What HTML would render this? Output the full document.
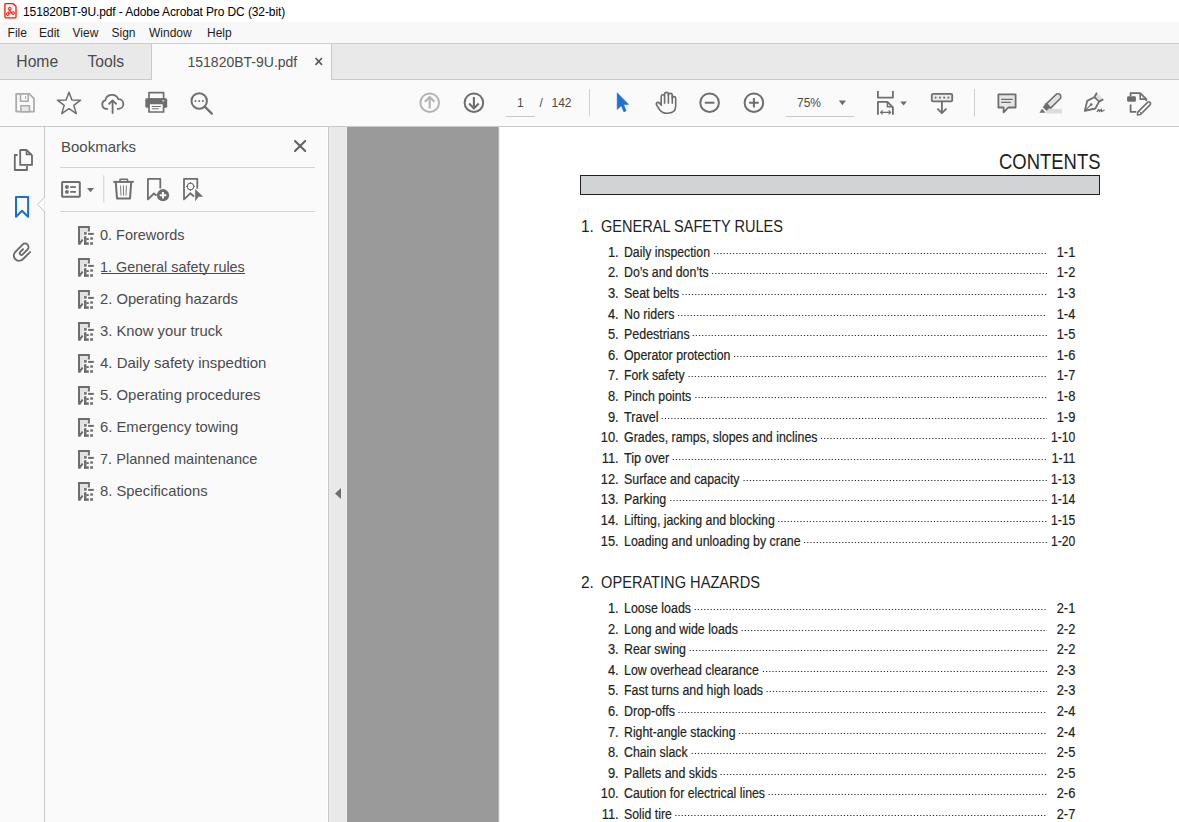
<!DOCTYPE html>
<html><head><meta charset="utf-8">
<style>
*{margin:0;padding:0;box-sizing:border-box}
html,body{width:1179px;height:822px;overflow:hidden;background:#fff;font-family:"Liberation Sans",sans-serif}
.a{position:absolute}
.t{position:absolute;white-space:nowrap;line-height:1}
#title{left:0;top:0;width:1179px;height:22px;background:#fff}
#menu{left:0;top:22px;width:1179px;height:22px;background:#f8f8f8;border-bottom:1px solid #cfcfcf}
#tabs{left:0;top:44px;width:1179px;height:36px;background:#e9e9e9;border-bottom:1px solid #c9c9c9}
#acttab{left:151px;top:44px;width:181px;height:36px;background:#fafafa;border-left:1px solid #c9c9c9;border-right:1px solid #c9c9c9}
#tool{left:0;top:80px;width:1179px;height:47px;background:#fafafa;border-bottom:1px solid #c9c9c9}
#rail{left:0;top:127px;width:45px;height:695px;background:#fafafa;border-right:1px solid #c9c9c9}
#panel{left:45px;top:127px;width:284px;height:695px;background:#fafafa;border-right:1px solid #c9c9c9}
#strip{left:329px;top:127px;width:18px;height:695px;background:#e9e9e9}
#gray{left:347px;top:127px;width:151px;height:695px;background:#9a9a9a}
#page{left:498px;top:127px;width:681px;height:695px;background:#fff}
svg{position:absolute;left:0;top:0}
</style></head><body>
<div id="title" class="a"></div>
<div id="menu" class="a"></div>
<div id="tabs" class="a"></div>
<div id="acttab" class="a"></div>
<div id="tool" class="a"></div>
<div id="rail" class="a"></div>
<div id="panel" class="a"></div>
<div id="strip" class="a"></div>
<div id="gray" class="a"></div>
<div id="page" class="a"></div>
<div class="a" style="left:327px;top:127px;width:1px;height:695px;background:#ffffff"></div>
<div class="a" style="left:346px;top:127px;width:1px;height:695px;background:#efefef"></div>
<div class="a" style="left:497px;top:127px;width:1px;height:695px;background:#959595"></div>
<div class="a" style="left:498px;top:127px;width:1px;height:695px;background:#b8b8b8"></div>
<div class="a" style="left:499px;top:127px;width:1px;height:695px;background:#eeeeee"></div>

<div class="t" style="left:23px;top:5.84px;font-size:12px;color:#000;letter-spacing:-0.1px">151820BT-9U.pdf - Adobe Acrobat Pro DC (32-bit)</div>
<div class="t" style="left:7.6px;top:26.84px;font-size:12px;color:#1e1e1e">File</div>
<div class="t" style="left:39px;top:26.84px;font-size:12px;color:#1e1e1e">Edit</div>
<div class="t" style="left:72.5px;top:26.84px;font-size:12px;color:#1e1e1e">View</div>
<div class="t" style="left:111.5px;top:26.84px;font-size:12px;color:#1e1e1e">Sign</div>
<div class="t" style="left:149px;top:26.84px;font-size:12px;color:#1e1e1e">Window</div>
<div class="t" style="left:207px;top:26.84px;font-size:12px;color:#1e1e1e">Help</div>
<div class="t" style="left:16.3px;top:53.5px;font-size:15.7px;color:#4b4b4b">Home</div>
<div class="t" style="left:87.5px;top:53.5px;font-size:15.7px;color:#4b4b4b">Tools</div>
<div class="t" style="left:187.5px;top:55.15px;font-size:14px;color:#4b4b4b">151820BT-9U.pdf</div>
<div class="t" style="left:517px;top:96.6px;font-size:12px;color:#4b4b4b">1</div>
<div class="t" style="left:539.5px;top:96.6px;font-size:12px;color:#4b4b4b">/</div>
<div class="t" style="left:551.5px;top:96.6px;font-size:12px;color:#4b4b4b">142</div>
<div class="t" style="left:797px;top:96.6px;font-size:12px;color:#4b4b4b">75%</div>
<div class="t" style="left:61px;top:139.3px;font-size:15px;color:#4b4b4b">Bookmarks</div>

<div class="a" style="left:60px;top:167px;width:255px;height:1px;background:#d2d2d2"></div>
<div class="a" style="left:60px;top:211px;width:255px;height:1px;background:#d2d2d2"></div>
<div class="t" style="left:100.40px;top:228.07px;font-size:14.8px;color:#4b4b4b;transform:scaleX(0.9785);transform-origin:0 0">0. Forewords</div>
<div class="t" style="left:100.40px;top:260.07px;font-size:14.8px;color:#4b4b4b;transform:scaleX(0.9726);transform-origin:0 0">1. General safety rules</div>
<div class="a" style="left:101px;top:272.6px;width:144px;height:1px;background:#4b4b4b"></div>
<div class="t" style="left:100.40px;top:292.07px;font-size:14.8px;color:#4b4b4b;transform:scaleX(0.9979);transform-origin:0 0">2. Operating hazards</div>
<div class="t" style="left:100.40px;top:324.07px;font-size:14.8px;color:#4b4b4b;transform:scaleX(0.9996);transform-origin:0 0">3. Know your truck</div>
<div class="t" style="left:100.40px;top:356.07px;font-size:14.8px;color:#4b4b4b;transform:scaleX(1.0116);transform-origin:0 0">4. Daily safety inspedtion</div>
<div class="t" style="left:100.40px;top:388.07px;font-size:14.8px;color:#4b4b4b;transform:scaleX(1.0058);transform-origin:0 0">5. Operating procedures</div>
<div class="t" style="left:100.40px;top:420.07px;font-size:14.8px;color:#4b4b4b;transform:scaleX(1.0002);transform-origin:0 0">6. Emergency towing</div>
<div class="t" style="left:100.40px;top:452.07px;font-size:14.8px;color:#4b4b4b;transform:scaleX(0.9868);transform-origin:0 0">7. Planned maintenance</div>
<div class="t" style="left:100.40px;top:484.07px;font-size:14.8px;color:#4b4b4b;transform:scaleX(0.9995);transform-origin:0 0">8. Specifications</div>

<div class="t" style="left:998.60px;top:150.38px;font-size:22.7px;color:#231f20;transform:scaleX(0.8134);transform-origin:0 0">CONTENTS</div>
<div class="a" style="left:580px;top:175px;width:520px;height:20px;background:#d1d3d4;border:1.3px solid #231f20"></div>
<div class="t" style="left:581.00px;top:218.44px;font-size:17.2px;color:#231f20;transform:scaleX(0.9);transform-origin:0 0">1.</div>
<div class="t" style="left:600.50px;top:218.44px;font-size:17.2px;color:#231f20;transform:scaleX(0.8468);transform-origin:0 0">GENERAL SAFETY RULES</div>
<div class="t" style="left:581.00px;top:574.44px;font-size:17.2px;color:#231f20;transform:scaleX(0.9);transform-origin:0 0">2.</div>
<div class="t" style="left:600.50px;top:574.44px;font-size:17.2px;color:#231f20;transform:scaleX(0.8509);transform-origin:0 0">OPERATING HAZARDS</div>
<div class="t" style="left:558px;width:60.700000000000045px;text-align:right;top:245.15px;font-size:14.0px;color:#231f20;-webkit-text-stroke:0.2px #231f20;transform:scaleX(0.92);transform-origin:100% 0">1.</div>
<div class="t" style="left:624.00px;top:245.15px;font-size:14.0px;color:#231f20;-webkit-text-stroke:0.2px #231f20;transform:scaleX(0.8770);transform-origin:0 0">Daily inspection</div>
<div class="t" style="left:1000px;width:75.3px;text-align:right;top:245.15px;font-size:14.0px;color:#231f20;-webkit-text-stroke:0.2px #231f20;transform:scaleX(0.92);transform-origin:100% 0">1-1</div>
<div class="t" style="left:558px;width:60.700000000000045px;text-align:right;top:265.15px;font-size:14.0px;color:#231f20;-webkit-text-stroke:0.2px #231f20;transform:scaleX(0.92);transform-origin:100% 0">2.</div>
<div class="t" style="left:624.00px;top:265.15px;font-size:14.0px;color:#231f20;-webkit-text-stroke:0.2px #231f20;transform:scaleX(0.8783);transform-origin:0 0">Do&#8217;s and don&#8217;ts</div>
<div class="t" style="left:1000px;width:75.3px;text-align:right;top:265.15px;font-size:14.0px;color:#231f20;-webkit-text-stroke:0.2px #231f20;transform:scaleX(0.92);transform-origin:100% 0">1-2</div>
<div class="t" style="left:558px;width:60.700000000000045px;text-align:right;top:286.15px;font-size:14.0px;color:#231f20;-webkit-text-stroke:0.2px #231f20;transform:scaleX(0.92);transform-origin:100% 0">3.</div>
<div class="t" style="left:624.00px;top:286.15px;font-size:14.0px;color:#231f20;-webkit-text-stroke:0.2px #231f20;transform:scaleX(0.8849);transform-origin:0 0">Seat belts</div>
<div class="t" style="left:1000px;width:75.3px;text-align:right;top:286.15px;font-size:14.0px;color:#231f20;-webkit-text-stroke:0.2px #231f20;transform:scaleX(0.92);transform-origin:100% 0">1-3</div>
<div class="t" style="left:558px;width:60.700000000000045px;text-align:right;top:307.15px;font-size:14.0px;color:#231f20;-webkit-text-stroke:0.2px #231f20;transform:scaleX(0.92);transform-origin:100% 0">4.</div>
<div class="t" style="left:624.00px;top:307.15px;font-size:14.0px;color:#231f20;-webkit-text-stroke:0.2px #231f20;transform:scaleX(0.8874);transform-origin:0 0">No riders</div>
<div class="t" style="left:1000px;width:75.3px;text-align:right;top:307.15px;font-size:14.0px;color:#231f20;-webkit-text-stroke:0.2px #231f20;transform:scaleX(0.92);transform-origin:100% 0">1-4</div>
<div class="t" style="left:558px;width:60.700000000000045px;text-align:right;top:327.15px;font-size:14.0px;color:#231f20;-webkit-text-stroke:0.2px #231f20;transform:scaleX(0.92);transform-origin:100% 0">5.</div>
<div class="t" style="left:624.00px;top:327.15px;font-size:14.0px;color:#231f20;-webkit-text-stroke:0.2px #231f20;transform:scaleX(0.8886);transform-origin:0 0">Pedestrians</div>
<div class="t" style="left:1000px;width:75.3px;text-align:right;top:327.15px;font-size:14.0px;color:#231f20;-webkit-text-stroke:0.2px #231f20;transform:scaleX(0.92);transform-origin:100% 0">1-5</div>
<div class="t" style="left:558px;width:60.700000000000045px;text-align:right;top:348.15px;font-size:14.0px;color:#231f20;-webkit-text-stroke:0.2px #231f20;transform:scaleX(0.92);transform-origin:100% 0">6.</div>
<div class="t" style="left:624.00px;top:348.15px;font-size:14.0px;color:#231f20;-webkit-text-stroke:0.2px #231f20;transform:scaleX(0.8821);transform-origin:0 0">Operator protection</div>
<div class="t" style="left:1000px;width:75.3px;text-align:right;top:348.15px;font-size:14.0px;color:#231f20;-webkit-text-stroke:0.2px #231f20;transform:scaleX(0.92);transform-origin:100% 0">1-6</div>
<div class="t" style="left:558px;width:60.700000000000045px;text-align:right;top:368.15px;font-size:14.0px;color:#231f20;-webkit-text-stroke:0.2px #231f20;transform:scaleX(0.92);transform-origin:100% 0">7.</div>
<div class="t" style="left:624.00px;top:368.15px;font-size:14.0px;color:#231f20;-webkit-text-stroke:0.2px #231f20;transform:scaleX(0.8751);transform-origin:0 0">Fork safety</div>
<div class="t" style="left:1000px;width:75.3px;text-align:right;top:368.15px;font-size:14.0px;color:#231f20;-webkit-text-stroke:0.2px #231f20;transform:scaleX(0.92);transform-origin:100% 0">1-7</div>
<div class="t" style="left:558px;width:60.700000000000045px;text-align:right;top:389.15px;font-size:14.0px;color:#231f20;-webkit-text-stroke:0.2px #231f20;transform:scaleX(0.92);transform-origin:100% 0">8.</div>
<div class="t" style="left:624.00px;top:389.15px;font-size:14.0px;color:#231f20;-webkit-text-stroke:0.2px #231f20;transform:scaleX(0.8823);transform-origin:0 0">Pinch points</div>
<div class="t" style="left:1000px;width:75.3px;text-align:right;top:389.15px;font-size:14.0px;color:#231f20;-webkit-text-stroke:0.2px #231f20;transform:scaleX(0.92);transform-origin:100% 0">1-8</div>
<div class="t" style="left:558px;width:60.700000000000045px;text-align:right;top:410.15px;font-size:14.0px;color:#231f20;-webkit-text-stroke:0.2px #231f20;transform:scaleX(0.92);transform-origin:100% 0">9.</div>
<div class="t" style="left:624.00px;top:410.15px;font-size:14.0px;color:#231f20;-webkit-text-stroke:0.2px #231f20;transform:scaleX(0.8987);transform-origin:0 0">Travel</div>
<div class="t" style="left:1000px;width:75.3px;text-align:right;top:410.15px;font-size:14.0px;color:#231f20;-webkit-text-stroke:0.2px #231f20;transform:scaleX(0.92);transform-origin:100% 0">1-9</div>
<div class="t" style="left:558px;width:60.700000000000045px;text-align:right;top:430.15px;font-size:14.0px;color:#231f20;-webkit-text-stroke:0.2px #231f20;transform:scaleX(0.92);transform-origin:100% 0">10.</div>
<div class="t" style="left:624.00px;top:430.15px;font-size:14.0px;color:#231f20;-webkit-text-stroke:0.2px #231f20;transform:scaleX(0.8849);transform-origin:0 0">Grades, ramps, slopes and inclines</div>
<div class="t" style="left:1000px;width:75.3px;text-align:right;top:430.15px;font-size:14.0px;color:#231f20;-webkit-text-stroke:0.2px #231f20;transform:scaleX(0.87);transform-origin:100% 0">1-10</div>
<div class="t" style="left:558px;width:60.700000000000045px;text-align:right;top:451.15px;font-size:14.0px;color:#231f20;-webkit-text-stroke:0.2px #231f20;transform:scaleX(0.92);transform-origin:100% 0">11.</div>
<div class="t" style="left:624.00px;top:451.15px;font-size:14.0px;color:#231f20;-webkit-text-stroke:0.2px #231f20;transform:scaleX(0.9049);transform-origin:0 0">Tip over</div>
<div class="t" style="left:1000px;width:75.3px;text-align:right;top:451.15px;font-size:14.0px;color:#231f20;-webkit-text-stroke:0.2px #231f20;transform:scaleX(0.87);transform-origin:100% 0">1-11</div>
<div class="t" style="left:558px;width:60.700000000000045px;text-align:right;top:472.15px;font-size:14.0px;color:#231f20;-webkit-text-stroke:0.2px #231f20;transform:scaleX(0.92);transform-origin:100% 0">12.</div>
<div class="t" style="left:624.00px;top:472.15px;font-size:14.0px;color:#231f20;-webkit-text-stroke:0.2px #231f20;transform:scaleX(0.8834);transform-origin:0 0">Surface and capacity</div>
<div class="t" style="left:1000px;width:75.3px;text-align:right;top:472.15px;font-size:14.0px;color:#231f20;-webkit-text-stroke:0.2px #231f20;transform:scaleX(0.87);transform-origin:100% 0">1-13</div>
<div class="t" style="left:558px;width:60.700000000000045px;text-align:right;top:492.15px;font-size:14.0px;color:#231f20;-webkit-text-stroke:0.2px #231f20;transform:scaleX(0.92);transform-origin:100% 0">13.</div>
<div class="t" style="left:624.00px;top:492.15px;font-size:14.0px;color:#231f20;-webkit-text-stroke:0.2px #231f20;transform:scaleX(0.8911);transform-origin:0 0">Parking</div>
<div class="t" style="left:1000px;width:75.3px;text-align:right;top:492.15px;font-size:14.0px;color:#231f20;-webkit-text-stroke:0.2px #231f20;transform:scaleX(0.87);transform-origin:100% 0">1-14</div>
<div class="t" style="left:558px;width:60.700000000000045px;text-align:right;top:513.15px;font-size:14.0px;color:#231f20;-webkit-text-stroke:0.2px #231f20;transform:scaleX(0.92);transform-origin:100% 0">14.</div>
<div class="t" style="left:624.00px;top:513.15px;font-size:14.0px;color:#231f20;-webkit-text-stroke:0.2px #231f20;transform:scaleX(0.8807);transform-origin:0 0">Lifting, jacking and blocking</div>
<div class="t" style="left:1000px;width:75.3px;text-align:right;top:513.15px;font-size:14.0px;color:#231f20;-webkit-text-stroke:0.2px #231f20;transform:scaleX(0.87);transform-origin:100% 0">1-15</div>
<div class="t" style="left:558px;width:60.700000000000045px;text-align:right;top:534.15px;font-size:14.0px;color:#231f20;-webkit-text-stroke:0.2px #231f20;transform:scaleX(0.92);transform-origin:100% 0">15.</div>
<div class="t" style="left:624.00px;top:534.15px;font-size:14.0px;color:#231f20;-webkit-text-stroke:0.2px #231f20;transform:scaleX(0.8862);transform-origin:0 0">Loading and unloading by crane</div>
<div class="t" style="left:1000px;width:75.3px;text-align:right;top:534.15px;font-size:14.0px;color:#231f20;-webkit-text-stroke:0.2px #231f20;transform:scaleX(0.87);transform-origin:100% 0">1-20</div>
<div class="t" style="left:558px;width:60.700000000000045px;text-align:right;top:601.15px;font-size:14.0px;color:#231f20;-webkit-text-stroke:0.2px #231f20;transform:scaleX(0.92);transform-origin:100% 0">1.</div>
<div class="t" style="left:624.00px;top:601.15px;font-size:14.0px;color:#231f20;-webkit-text-stroke:0.2px #231f20;transform:scaleX(0.8886);transform-origin:0 0">Loose loads</div>
<div class="t" style="left:1000px;width:75.3px;text-align:right;top:601.15px;font-size:14.0px;color:#231f20;-webkit-text-stroke:0.2px #231f20;transform:scaleX(0.92);transform-origin:100% 0">2-1</div>
<div class="t" style="left:558px;width:60.700000000000045px;text-align:right;top:622.15px;font-size:14.0px;color:#231f20;-webkit-text-stroke:0.2px #231f20;transform:scaleX(0.92);transform-origin:100% 0">2.</div>
<div class="t" style="left:624.00px;top:622.15px;font-size:14.0px;color:#231f20;-webkit-text-stroke:0.2px #231f20;transform:scaleX(0.8868);transform-origin:0 0">Long and wide loads</div>
<div class="t" style="left:1000px;width:75.3px;text-align:right;top:622.15px;font-size:14.0px;color:#231f20;-webkit-text-stroke:0.2px #231f20;transform:scaleX(0.92);transform-origin:100% 0">2-2</div>
<div class="t" style="left:558px;width:60.700000000000045px;text-align:right;top:642.15px;font-size:14.0px;color:#231f20;-webkit-text-stroke:0.2px #231f20;transform:scaleX(0.92);transform-origin:100% 0">3.</div>
<div class="t" style="left:624.00px;top:642.15px;font-size:14.0px;color:#231f20;-webkit-text-stroke:0.2px #231f20;transform:scaleX(0.8853);transform-origin:0 0">Rear swing</div>
<div class="t" style="left:1000px;width:75.3px;text-align:right;top:642.15px;font-size:14.0px;color:#231f20;-webkit-text-stroke:0.2px #231f20;transform:scaleX(0.92);transform-origin:100% 0">2-2</div>
<div class="t" style="left:558px;width:60.700000000000045px;text-align:right;top:663.15px;font-size:14.0px;color:#231f20;-webkit-text-stroke:0.2px #231f20;transform:scaleX(0.92);transform-origin:100% 0">4.</div>
<div class="t" style="left:624.00px;top:663.15px;font-size:14.0px;color:#231f20;-webkit-text-stroke:0.2px #231f20;transform:scaleX(0.8843);transform-origin:0 0">Low overhead clearance</div>
<div class="t" style="left:1000px;width:75.3px;text-align:right;top:663.15px;font-size:14.0px;color:#231f20;-webkit-text-stroke:0.2px #231f20;transform:scaleX(0.92);transform-origin:100% 0">2-3</div>
<div class="t" style="left:558px;width:60.700000000000045px;text-align:right;top:683.15px;font-size:14.0px;color:#231f20;-webkit-text-stroke:0.2px #231f20;transform:scaleX(0.92);transform-origin:100% 0">5.</div>
<div class="t" style="left:624.00px;top:683.15px;font-size:14.0px;color:#231f20;-webkit-text-stroke:0.2px #231f20;transform:scaleX(0.8841);transform-origin:0 0">Fast turns and high loads</div>
<div class="t" style="left:1000px;width:75.3px;text-align:right;top:683.15px;font-size:14.0px;color:#231f20;-webkit-text-stroke:0.2px #231f20;transform:scaleX(0.92);transform-origin:100% 0">2-3</div>
<div class="t" style="left:558px;width:60.700000000000045px;text-align:right;top:704.15px;font-size:14.0px;color:#231f20;-webkit-text-stroke:0.2px #231f20;transform:scaleX(0.92);transform-origin:100% 0">6.</div>
<div class="t" style="left:624.00px;top:704.15px;font-size:14.0px;color:#231f20;-webkit-text-stroke:0.2px #231f20;transform:scaleX(0.8896);transform-origin:0 0">Drop-offs</div>
<div class="t" style="left:1000px;width:75.3px;text-align:right;top:704.15px;font-size:14.0px;color:#231f20;-webkit-text-stroke:0.2px #231f20;transform:scaleX(0.92);transform-origin:100% 0">2-4</div>
<div class="t" style="left:558px;width:60.700000000000045px;text-align:right;top:725.15px;font-size:14.0px;color:#231f20;-webkit-text-stroke:0.2px #231f20;transform:scaleX(0.92);transform-origin:100% 0">7.</div>
<div class="t" style="left:624.00px;top:725.15px;font-size:14.0px;color:#231f20;-webkit-text-stroke:0.2px #231f20;transform:scaleX(0.8789);transform-origin:0 0">Right-angle stacking</div>
<div class="t" style="left:1000px;width:75.3px;text-align:right;top:725.15px;font-size:14.0px;color:#231f20;-webkit-text-stroke:0.2px #231f20;transform:scaleX(0.92);transform-origin:100% 0">2-4</div>
<div class="t" style="left:558px;width:60.700000000000045px;text-align:right;top:745.15px;font-size:14.0px;color:#231f20;-webkit-text-stroke:0.2px #231f20;transform:scaleX(0.92);transform-origin:100% 0">8.</div>
<div class="t" style="left:624.00px;top:745.15px;font-size:14.0px;color:#231f20;-webkit-text-stroke:0.2px #231f20;transform:scaleX(0.8788);transform-origin:0 0">Chain slack</div>
<div class="t" style="left:1000px;width:75.3px;text-align:right;top:745.15px;font-size:14.0px;color:#231f20;-webkit-text-stroke:0.2px #231f20;transform:scaleX(0.92);transform-origin:100% 0">2-5</div>
<div class="t" style="left:558px;width:60.700000000000045px;text-align:right;top:766.15px;font-size:14.0px;color:#231f20;-webkit-text-stroke:0.2px #231f20;transform:scaleX(0.92);transform-origin:100% 0">9.</div>
<div class="t" style="left:624.00px;top:766.15px;font-size:14.0px;color:#231f20;-webkit-text-stroke:0.2px #231f20;transform:scaleX(0.8861);transform-origin:0 0">Pallets and skids</div>
<div class="t" style="left:1000px;width:75.3px;text-align:right;top:766.15px;font-size:14.0px;color:#231f20;-webkit-text-stroke:0.2px #231f20;transform:scaleX(0.92);transform-origin:100% 0">2-5</div>
<div class="t" style="left:558px;width:60.700000000000045px;text-align:right;top:786.15px;font-size:14.0px;color:#231f20;-webkit-text-stroke:0.2px #231f20;transform:scaleX(0.92);transform-origin:100% 0">10.</div>
<div class="t" style="left:624.00px;top:786.15px;font-size:14.0px;color:#231f20;-webkit-text-stroke:0.2px #231f20;transform:scaleX(0.8796);transform-origin:0 0">Caution for electrical lines</div>
<div class="t" style="left:1000px;width:75.3px;text-align:right;top:786.15px;font-size:14.0px;color:#231f20;-webkit-text-stroke:0.2px #231f20;transform:scaleX(0.92);transform-origin:100% 0">2-6</div>
<div class="t" style="left:558px;width:60.700000000000045px;text-align:right;top:807.15px;font-size:14.0px;color:#231f20;-webkit-text-stroke:0.2px #231f20;transform:scaleX(0.92);transform-origin:100% 0">11.</div>
<div class="t" style="left:624.00px;top:807.15px;font-size:14.0px;color:#231f20;-webkit-text-stroke:0.2px #231f20;transform:scaleX(0.8776);transform-origin:0 0">Solid tire</div>
<div class="t" style="left:1000px;width:75.3px;text-align:right;top:807.15px;font-size:14.0px;color:#231f20;-webkit-text-stroke:0.2px #231f20;transform:scaleX(0.92);transform-origin:100% 0">2-7</div>
<svg width="1179" height="822" style="position:absolute;left:0;top:0"><g stroke="#2a2a2a" stroke-width="1" stroke-dasharray="1.2 1.98" fill="none"><path d="M714.00 253.50 H1047"/><path d="M712.00 273.50 H1047"/><path d="M682.40 294.50 H1047"/><path d="M678.00 315.50 H1047"/><path d="M692.60 335.50 H1047"/><path d="M734.00 356.50 H1047"/><path d="M688.50 376.50 H1047"/><path d="M695.30 397.50 H1047"/><path d="M661.70 418.50 H1047"/><path d="M820.90 438.50 H1047"/><path d="M672.70 459.50 H1047"/><path d="M743.50 480.50 H1047"/><path d="M670.20 500.50 H1047"/><path d="M778.10 521.50 H1047"/><path d="M804.00 542.50 H1047"/><path d="M694.70 609.50 H1047"/><path d="M741.50 630.50 H1047"/><path d="M689.60 650.50 H1047"/><path d="M762.90 671.50 H1047"/><path d="M766.50 691.50 H1047"/><path d="M678.40 712.50 H1047"/><path d="M739.00 733.50 H1047"/><path d="M691.60 753.50 H1047"/><path d="M720.50 774.50 H1047"/><path d="M768.50 794.50 H1047"/><path d="M675.30 815.50 H1047"/></g></svg>

<svg width="1179" height="822" viewBox="0 0 1179 822">
<g fill="none" stroke-linecap="butt" stroke-linejoin="round">
<!-- title pdf icon -->
<path d="M5.7 3.7 H13.2 L16 6.5 V17 Q16 17.8 15.2 17.8 H5.7 Q4.9 17.8 4.9 17 V4.5 Q4.9 3.7 5.7 3.7 Z" stroke="#fa1405" stroke-width="1.3" fill="#f6fbfb"/>
<rect x="6.8" y="5.6" width="7" height="9.5" fill="#eef0f0" stroke="none"/>
<g fill="#fa1405" stroke="none"><circle cx="9.8" cy="8.8" r="1.8"/><circle cx="7.7" cy="14.1" r="1.8"/><circle cx="13.1" cy="13.1" r="1.8"/><circle cx="9.8" cy="12" r="1.4"/></g>
<path d="M9.8 8.8 V12 L7.7 14.1 M9.8 12 L13.1 13.1" stroke="#fa1405" stroke-width="1.5"/>
<g fill="#fff" stroke="none"><circle cx="9.8" cy="8.8" r="0.8"/><circle cx="7.7" cy="14.1" r="0.8"/><circle cx="13.1" cy="13.1" r="0.8"/><circle cx="9.8" cy="12" r="0.7"/></g>

<!-- tab close -->
<path d="M315.5 58 L322 64.8 M322 58 L315.5 64.8" stroke="#5a5a5a" stroke-width="1.7"/>

<!-- save (disabled) -->
<path d="M16.2 93.9 H29.3 L34 98.6 V111.6 H16.2 Z" stroke="#ababab" stroke-width="1.8"/>
<path d="M20.5 93.9 V101.3 H28.2 V93.9" stroke="#ababab" stroke-width="1.6"/>
<path d="M25.5 96 V99" stroke="#ababab" stroke-width="1"/>
<rect x="20.9" y="105.7" width="8.6" height="6" fill="#e8e8e8" stroke="#ababab" stroke-width="1.6"/>

<!-- star -->
<path d="M69 92.2 L71.9 100.1 L80.6 100.2 L73.8 105.4 L76.3 113.6 L69 108.6 L61.7 113.6 L64.2 105.4 L57.4 100.2 L66.1 100.1 Z" stroke="#6e6e6e" stroke-width="1.5"/>

<!-- cloud upload -->
<path d="M108 108.8 H106.5 A4.3 4.3 0 0 1 105.3 100.4 A6.8 6.8 0 0 1 118.3 99.2 A4.8 4.8 0 0 1 118.8 108.8 H117" stroke="#6e6e6e" stroke-width="1.8"/>
<path d="M112.6 113.7 V100.6 M108.6 104.4 L112.6 100.4 L116.6 104.4" stroke="#6e6e6e" stroke-width="1.8"/>

<!-- print -->
<rect x="149" y="92.6" width="14.6" height="6.5" stroke="#6e6e6e" stroke-width="1.7"/>
<rect x="145.3" y="98.3" width="21.9" height="9.5" rx="1.3" fill="#6e6e6e"/>
<rect x="149" y="103.4" width="14.6" height="8.6" fill="#fafafa" stroke="#6e6e6e" stroke-width="1.7"/>
<path d="M151.8 106.5 H160.8 M151.8 108.8 H158.8" stroke="#6e6e6e" stroke-width="1"/>
<rect x="162.2" y="100.4" width="2" height="1" fill="#fafafa"/>

<!-- search more -->
<circle cx="199.2" cy="101" r="7.7" stroke="#6e6e6e" stroke-width="2"/>
<path d="M204.8 106.6 L211.8 113.6" stroke="#6e6e6e" stroke-width="2.2" stroke-linecap="round"/>
<g fill="#6e6e6e" stroke="none"><circle cx="195.5" cy="101" r="1"/><circle cx="199.2" cy="101" r="1"/><circle cx="202.9" cy="101" r="1"/></g>

<!-- page up (disabled) / down -->
<circle cx="429.7" cy="102.7" r="9.3" stroke="#b4b4b4" stroke-width="2"/>
<path d="M429.7 108.5 V97.2 M424.9 101.8 L429.7 97 L434.5 101.8" stroke="#b4b4b4" stroke-width="2.1"/>
<circle cx="473.9" cy="102.7" r="9.3" stroke="#6e6e6e" stroke-width="2"/>
<path d="M473.9 97 V108.2 M469.1 103.6 L473.9 108.4 L478.7 103.6" stroke="#6e6e6e" stroke-width="2.1"/>
<rect x="506" y="116" width="28.5" height="1" fill="#c8c8c8" stroke="none"/>
<rect x="589" y="89" width="1" height="27.5" fill="#d0d0d0" stroke="none"/>

<!-- select arrow -->
<path d="M617.2 92.8 L628.6 104.4 L623.6 104.6 L626.1 110.8 L623.9 111.9 L621.3 105.7 L617.2 109.4 Z" fill="#2271d0" stroke="#2271d0" stroke-width="0.6"/>

<!-- hand -->
<path d="M661.2 105.3 V96.5 A1.7 1.7 0 0 1 664.6 96.5 V94.3 A1.9 1.9 0 0 1 668.4 94.3 V95.35 A1.95 1.95 0 0 1 672.3 95.35 V98.3 A1.7 1.7 0 0 1 675.7 98.3 V106 Q675.7 113.3 667 113.3 Q662.3 113.3 659.8 110 L656.6 105 Q655.8 103.3 657.2 102.5 Q658.5 101.9 659.6 103.3 Z" stroke="#6e6e6e" stroke-width="1.6"/>
<path d="M664.6 96.5 V103.7 M668.4 94.3 V103.7 M672.3 95.35 V103.7" stroke="#6e6e6e" stroke-width="1.6"/>

<!-- zoom out / in -->
<circle cx="709.6" cy="102.7" r="9.3" stroke="#6e6e6e" stroke-width="2"/>
<path d="M704.8 102.7 H714.4" stroke="#6e6e6e" stroke-width="2"/>
<circle cx="753.9" cy="102.7" r="9.3" stroke="#6e6e6e" stroke-width="2"/>
<path d="M749.1 102.7 H758.7 M753.9 97.9 V107.5" stroke="#6e6e6e" stroke-width="2"/>

<!-- zoom field -->
<rect x="786" y="116" width="68" height="1" fill="#c8c8c8" stroke="none"/>
<path d="M838.8 100.6 H846 L842.4 105.2 Z" fill="#6e6e6e" stroke="none"/>

<!-- fit page -->
<path d="M877.9 91 V97.6 H892.9 V91" stroke="#6e6e6e" stroke-width="1.8"/>
<path d="M877.9 114.7 V101.8 H887.4 L892.9 107.3 V114.7" stroke="#6e6e6e" stroke-width="1.8"/>
<path d="M887.4 101.8 V106.8 H892.9" stroke="#6e6e6e" stroke-width="1.5"/>
<path d="M880.6 112.4 H890.6 M882.6 110.4 L880.6 112.4 L882.6 114.4 M888.6 110.4 L890.6 112.4 L888.6 114.4" stroke="#6e6e6e" stroke-width="1.2"/>
<path d="M900.2 101.4 H907 L903.6 105.4 Z" fill="#6e6e6e" stroke="none"/>

<!-- page display -->
<rect x="931.8" y="93.8" width="20.4" height="7.6" rx="1.2" fill="#ebebeb" stroke="#6e6e6e" stroke-width="1.8"/>
<g fill="#6e6e6e" stroke="none"><rect x="934.7" y="96.7" width="1.8" height="1.8"/><rect x="939" y="96.7" width="1.8" height="1.8"/><rect x="943.3" y="96.7" width="1.8" height="1.8"/><rect x="947.5" y="96.7" width="1.8" height="1.8"/></g>
<path d="M941.9 101.7 V113 M937.4 108.6 L941.9 113.2 L946.4 108.6" stroke="#6e6e6e" stroke-width="1.8"/>
<rect x="974" y="89" width="1" height="27.5" fill="#d0d0d0" stroke="none"/>

<!-- comment -->
<path d="M998.4 94.3 H1015.6 V107.5 H1008.3 L1003.6 112.4 V107.5 H998.4 Z" fill="#e6e6e6" stroke="#6e6e6e" stroke-width="1.8"/>
<path d="M1001.2 99.4 H1012.8 M1001.2 102.4 H1010.8" stroke="#6e6e6e" stroke-width="1.2"/>

<!-- highlighter -->
<rect x="1045.9" y="108.9" width="16" height="4.6" fill="#dcdcdc" stroke="none"/>
<path d="M1046.3 103.9 L1056.6 94 Q1058.4 93.3 1060.4 94.8 Q1061 96.4 1060.6 98.3 L1050.6 108.1 Z" fill="#e2e2e2" stroke="#6e6e6e" stroke-width="1.6"/>
<path d="M1043.1 107.4 L1045.6 103.4 L1047.7 104 L1050.4 107.3 L1046.6 110.4 Z" fill="#6e6e6e" stroke="#6e6e6e" stroke-width="0.6"/>
<path d="M1039.9 112.5 L1042.1 109.1 L1045 112.5 Z" fill="#6e6e6e" stroke="#6e6e6e" stroke-width="0.5"/>
<!-- fill & sign pen -->
<path d="M1096.7 92.7 L1103.5 99.6 L1099.1 101.6 L1094.3 97.2 Z" fill="#dedede" stroke="none"/>
<path d="M1096.9 92.6 L1094.3 97.2 L1087.2 100.9 L1084.8 110.9 L1095.3 108.5 L1099.1 101.6 L1103.3 99.4" stroke="#6e6e6e" stroke-width="1.8"/>
<path d="M1094.3 97.2 L1099.1 101.6" stroke="#6e6e6e" stroke-width="1.6"/>
<path d="M1085.3 110.3 L1091.2 104.5" stroke="#6e6e6e" stroke-width="1.1"/>
<circle cx="1091.2" cy="104.6" r="1.3" fill="#6e6e6e" stroke="none"/>
<path d="M1096.9 111.8 L1098.7 109.4 L1099.5 111.6 L1101.3 109.2 L1101.7 111.5 L1104.6 110" stroke="#6e6e6e" stroke-width="1.3"/>
<!-- edit pdf -->
<rect x="1127.1" y="96.2" width="8.8" height="5.5" rx="1.2" fill="#6e6e6e" stroke="none"/>
<path d="M1130.6 96 V93.2 H1140.2 L1146.3 99.1 V101" stroke="#6e6e6e" stroke-width="1.8"/>
<path d="M1140.2 93.2 V99.1 H1146.3" stroke="#6e6e6e" stroke-width="1.6"/>
<path d="M1130.6 104.6 V111.8 H1136.3" stroke="#6e6e6e" stroke-width="1.8"/>
<path d="M1149.4 101.8 Q1151.2 103.1 1150.3 104.6 L1140.3 114.6 L1137.4 115 L1137.8 112.1 L1147.8 102.1 Q1148.7 101.4 1149.4 101.8 Z" fill="#fafafa" stroke="#6e6e6e" stroke-width="1.5"/>
<path d="M1138.8 111 L1141.4 113.5" stroke="#6e6e6e" stroke-width="1"/>

<!-- rail notch + icons -->
<path d="M44.5 197.4 L37.3 204.4 L44.5 211.4" fill="#fafafa" stroke="#c9c9c9" stroke-width="1"/>
<rect x="44.5" y="198" width="1.5" height="13" fill="#fafafa" stroke="none"/>
<path d="M17.5 155 H14.8 V170 H27 V166" stroke="#6b6b6b" stroke-width="1.8"/>
<path d="M20.2 150 H26.5 L32 155.4 V164.9 H20.2 Z" stroke="#6b6b6b" stroke-width="1.8"/>
<path d="M26.5 150 V154.4 H32" stroke="#6b6b6b" stroke-width="1.6"/>
<path d="M16 197 H28.1 V216.8 L22 210.8 L16 216.8 Z" stroke="#1670d6" stroke-width="2"/>
<path transform="matrix(0.7071 -0.7071 0.7071 0.7071 0 0)" d="M-160 192.5 H-163.8 A1.7 1.7 0 0 0 -163.8 195.9 H-157 A3.5 3.5 0 0 0 -157 188.9 H-167.2 A5.3 5.3 0 0 0 -167.2 199.5 H-157" stroke="#6b6b6b" stroke-width="1.9" stroke-linecap="round"/>

<!-- panel close -->
<path d="M295 141.1 L305.2 151 M305.2 141.1 L295 151" stroke="#626262" stroke-width="2.1" stroke-linecap="round"/>

<!-- panel tools -->
<rect x="62.1" y="182.1" width="17.7" height="14.6" rx="0.6" stroke="#6e6e6e" stroke-width="2"/>
<g fill="#6e6e6e" stroke="none"><circle cx="66.9" cy="187" r="1.95"/><circle cx="66.9" cy="191.9" r="1.95"/><rect x="70.2" y="186.1" width="5.7" height="1.8"/><rect x="70.2" y="191" width="5.7" height="1.8"/></g>
<path d="M87 188 H94 L90.5 192.2 Z" fill="#6e6e6e" stroke="none"/>
<rect x="103.3" y="175.3" width="1" height="27.3" fill="#cfcfcf" stroke="none"/>
<path d="M113.3 181.9 H133.7" stroke="#6e6e6e" stroke-width="2"/>
<path d="M120 182 V179.3 H127.5 V182" stroke="#6e6e6e" stroke-width="1.5"/>
<path d="M115.8 182.5 L117 198.5 H130 L131.2 182.5" stroke="#6e6e6e" stroke-width="2"/>
<path d="M120.6 185.5 L121 195.6 M123.5 185.5 V195.6 M126.4 185.5 L126 195.6" stroke="#6e6e6e" stroke-width="0.9"/>
<path d="M160.3 188.6 V178.9 H147.9 V199.4 L154 193.5 L156.5 195.5" stroke="#6e6e6e" stroke-width="1.8"/>
<circle cx="163" cy="195.2" r="6.1" fill="#6e6e6e" stroke="none"/>
<path d="M159.7 195.2 H166.3 M163 191.9 V198.5" stroke="#fafafa" stroke-width="2"/>
<path d="M197.3 188.8 V178.9 H184 V199.4 L190.3 193.3 L194 196.5" stroke="#6e6e6e" stroke-width="1.8"/>
<circle cx="190.5" cy="186.4" r="3.1" stroke="#6e6e6e" stroke-width="1.1"/>
<path d="M190.5 182 V183.8 M190.5 189 V190.8 M186.1 186.4 H187.9 M193.1 186.4 H194.9" stroke="#6e6e6e" stroke-width="1.2"/>
<path d="M195.2 189 L203.2 196.8 L198.6 196.8 L195.2 201.2 Z" fill="#6e6e6e" stroke="none"/>

<!-- collapse triangle -->
<path d="M341 488 V499 L335 493.5 Z" fill="#6e6e6e" stroke="none"/>
</g>

<!-- bookmark tree icons -->
<defs>
<g id="bi">
<path d="M80 228 H88 V232 H83.5 V239.5 L80 243.5 Z" fill="#e2e2e2" stroke="none"/>
<path d="M79 244.6 V227 H88.9 V231.5" fill="none" stroke="#6e6e6e" stroke-width="2"/>
<path d="M79.2 244.3 L82.6 239.6" fill="none" stroke="#6e6e6e" stroke-width="2"/>
<g fill="#6e6e6e"><rect x="84" y="232.1" width="2.7" height="2.6"/><rect x="88.1" y="232.9" width="5.7" height="2"/><rect x="84" y="236.2" width="2.5" height="8.6"/><rect x="84" y="242.3" width="4.8" height="2.5"/><rect x="86.4" y="238.1" width="2.4" height="1.9"/><rect x="90.2" y="237.3" width="2.7" height="2.4"/><rect x="90.2" y="242.2" width="2.7" height="2.6"/></g>
</g>
</defs>
<use href="#bi" y="0"/><use href="#bi" y="32"/><use href="#bi" y="64"/><use href="#bi" y="96"/><use href="#bi" y="128"/><use href="#bi" y="160"/><use href="#bi" y="192"/><use href="#bi" y="224"/><use href="#bi" y="256"/>
</svg>
</body></html>
